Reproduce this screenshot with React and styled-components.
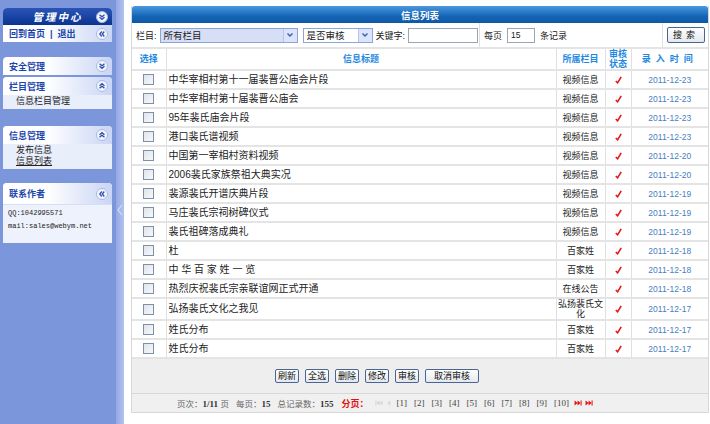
import React from "react";
import styled, { createGlobalStyle } from "styled-components";

const Global = createGlobalStyle`
  html, body { margin: 0; padding: 0; background: #fff; }
  body { font-family: "Liberation Sans", "Noto Sans CJK SC", sans-serif; font-size: 9.5px; color: #222; }
`;

const Page = styled.div`
  display: flex;
  width: 710px;
  height: 424px;
  overflow: hidden;
`;

const Sidebar = styled.div`
  width: 109px;
  flex: none;
  background: #7c96dc;
  padding: 8px 4px 0 3px;
  display: flex;
  flex-direction: column;
`;

const Divider = styled.div`
  width: 8px;
  flex: none;
  background: linear-gradient(to right, #93a9e4, #b3c2ee);
  display: flex;
  align-items: center;
  justify-content: center;
  padding-bottom: 4px;
`;

const Box = styled.div`
  margin-top: ${(p) => p.$gap || 0}px;
  background: #fff;
  border-radius: 4px 4px 0 0;
  overflow: hidden;
`;

const BoxHead = styled.div`
  height: ${(p) => p.$h || 18}px;
  display: flex;
  align-items: center;
  justify-content: space-between;
  padding: 0 4px 0 6px;
  white-space: nowrap;
  background: ${(p) =>
    p.$dark
      ? "linear-gradient(#2a55b8, #0b3490)"
      : "linear-gradient(to right, #ffffff 40%, #c9d5f5)"};
  color: ${(p) => (p.$dark ? "#fff" : "#1c45ad")};
  font-weight: bold;
  font-size: 9px;
  border-bottom: ${(p) => (p.$line ? "1px solid #d6def5" : "none")};
`;

const Logo = styled.span`
  flex: 1;
  text-align: center;
  font-style: italic;
  letter-spacing: 2px;
  font-size: 10.5px;
  padding-left: 10px;
`;

const Item = styled.div`
  background: #e9eefb;
  padding: ${(p) => p.$pad || "1px 0 1px 13px"};
  color: #222;
  line-height: 11px;
  height: 11px;
  font-size: 9px;
  text-decoration: ${(p) => (p.$u ? "underline" : "none")};
`;

const Contact = styled.div`
  background: #eef2fc;
  height: 36px;
  padding: 2px 0 0 5px;
  font-family: "Liberation Mono", "DejaVu Sans Mono", monospace;
  font-size: 7px;
  line-height: 13px;
  color: #222;
`;

const Main = styled.div`
  flex: 1;
  padding: 6px 4px 0 7px;
`;

const Panel = styled.div`
  border: 1px solid #d8d8d8;
  border-top: none;
`;

const TitleBar = styled.div`
  height: 17px;
  background: linear-gradient(#4a98e0, #1565b5 60%, #0d58a6);
  border-radius: 3px 3px 0 0;
  color: #fff;
  font-weight: bold;
  font-size: 9.5px;
  display: flex;
  align-items: center;
  justify-content: center;
`;

const SearchRow = styled.div`
  display: grid;
  grid-template-columns: 348px 183px 1fr;
  height: 24px;
  border-bottom: 2px solid #e4e4e4;
  white-space: nowrap;
`;

const SearchCell = styled.div`
  display: flex;
  align-items: center;
  gap: 3px;
  padding-left: 4px;
  justify-content: ${(p) => (p.$end ? "flex-end" : "flex-start")};
  padding-right: ${(p) => (p.$end ? 3 : 0)}px;
  font-size: 9px;
  border-right: ${(p) => (p.$last ? "none" : "1px solid #e0e0e0")};
`;

const Select = styled.div`
  width: ${(p) => p.$w}px;
  height: 15px;
  flex: none;
  border: 1px solid #8ca4d6;
  background: ${(p) => (p.$tint ? "#d7dff7" : "#fff")};
  display: flex;
  align-items: center;
  justify-content: space-between;
  padding-left: 3px;
  box-sizing: border-box;
  font-size: 9.5px;
  margin-right: ${(p) => p.$mr || 0}px;
`;

const SelArrow = styled.span`
  width: 13px;
  height: 13px;
  background: #dbe4fb;
  border-left: 1px solid #b5c5ec;
  display: flex;
  align-items: center;
  justify-content: center;
`;

const Input = styled.div`
  width: ${(p) => p.$w}px;
  height: 15px;
  flex: none;
  border: 1px solid #9aa5b5;
  box-sizing: border-box;
  background: #fff;
  padding-left: 3px;
  font-size: 8.5px;
  line-height: 13px;
  margin: 0 ${(p) => p.$mx || 0}px;
`;

const Button = styled.button`
  font-family: inherit;
  font-size: 9px;
  height: ${(p) => p.$h || 14}px;
  padding: 0 ${(p) => p.$px || 2}px;
  border: 1px solid #4a6590;
  border-radius: 2px;
  background: linear-gradient(#ffffff, #e4e8ee);
  color: #111;
  line-height: 1;
  white-space: nowrap;
  letter-spacing: ${(p) => p.$ls || 0}px;
  cursor: pointer;
`;

const Table = styled.table`
  width: 100%;
  border-collapse: collapse;
  table-layout: fixed;
`;

const Th = styled.th`
  color: #1e88e0;
  font-weight: bold;
  font-size: 9px;
  line-height: 10px;
  height: 18px;
  padding: 0;
  letter-spacing: ${(p) => p.$ls || 0}px;
  border-bottom: 2px solid #e4e4e4;
  border-right: 1px solid #e0e0e0;
  &:last-child { border-right: none; }
`;

const Td = styled.td`
  height: ${(p) => p.$h || 17}px;
  padding: 0 0 0 ${(p) => (p.$left ? 2 : 0)}px;
  text-align: ${(p) => (p.$left ? "left" : "center")};
  font-size: ${(p) => p.$fs || 9.5}px;
  line-height: 10px;
  color: ${(p) => p.$color || "#222"};
  white-space: nowrap;
  border-bottom: 2px solid #e4e4e4;
  border-right: 1px solid #e0e0e0;
  &:last-child { border-right: none; }
`;

const Check = styled.span`
  display: block;
  margin: 0 auto;
  width: 9px;
  height: 9px;
  border: 1px solid #7d90a8;
  background: linear-gradient(135deg, #dfe5ec, #f6f8fa);
`;

const Actions = styled.div`
  background: #eeeeee;
  height: 34px;
  display: flex;
  align-items: center;
  justify-content: center;
  gap: 6px;
  padding-right: 86px;
  border-bottom: 1px solid #d8d8d8;
`;

const Pager = styled.div`
  background: #f0f0f0;
  height: 18px;
  display: flex;
  align-items: center;
  justify-content: center;
  gap: 3px;
  padding-right: 70px;
  color: #666;
  font-size: 8.5px;
  white-space: nowrap;
`;

const B = styled.b`
  color: #333;
  font-family: "Liberation Serif", serif;
  font-size: 9px;
`;

const Red = styled.b`
  color: #e01010;
  font-size: 9px;
  margin: 0 4px 0 5px;
`;

const PageNum = styled.span`
  color: #444;
  font-family: "Liberation Serif", serif;
  font-size: 9px;
  margin: 0 2px;
`;

const Label = styled.span`
  margin-left: ${(p) => p.$ml || 0}px;
`;

const RoundIcon = ({ dir }) => {
  const paths = {
    down: ["M3.5 3.8 L6 5.8 L8.5 3.8", "M3.5 6.3 L6 8.3 L8.5 6.3"],
    up: ["M3.5 5.7 L6 3.7 L8.5 5.7", "M3.5 8.2 L6 6.2 L8.5 8.2"],
    left: ["M5.8 3.5 L3.8 6 L5.8 8.5", "M8.3 3.5 L6.3 6 L8.3 8.5"],
  };
  return (
    <svg width="12" height="12" viewBox="0 0 12 12">
      <circle cx="6" cy="6" r="5.5" fill="#f4f6fc" stroke="#a9b9e6" />
      {paths[dir].map((d) => (
        <path key={d} d={d} fill="none" stroke="#2a52b0" strokeWidth="1.3" />
      ))}
    </svg>
  );
};

const Tick = () => (
  <svg width="7" height="8" viewBox="0 0 7 8" style={{ display: "block", margin: "0 auto" }}>
    <path d="M0.8 5 L2.6 6.8 L6.2 0.8" fill="none" stroke="#e01818" strokeWidth="1.6" />
  </svg>
);

const Chevron = ({ color = "#3b5fb0" }) => (
  <svg width="8" height="6" viewBox="0 0 8 6">
    <path d="M1.5 1.5 L4 4 L6.5 1.5" fill="none" stroke={color} strokeWidth="1.4" />
  </svg>
);

const Skip = ({ color, rev }) => (
  <svg width="8" height="6" viewBox="0 0 9 7" style={{ transform: rev ? "scaleX(-1)" : "none" }}>
    <path d="M0.5 0.5 L4 3.5 L0.5 6.5 Z M4 0.5 L7.5 3.5 L4 6.5 Z" fill={color} />
    <rect x="7.5" y="0.5" width="1.2" height="6" fill={color} />
  </svg>
);

const Prev = ({ color }) => (
  <svg width="5" height="6" viewBox="0 0 5 7">
    <path d="M4.5 0.5 L1 3.5 L4.5 6.5 Z" fill={color} />
  </svg>
);

const rows = [
  ["中华宰相村第十一届裴晋公庙会片段", "视频信息", "2011-12-23"],
  ["中华宰相村第十届裴晋公庙会", "视频信息", "2011-12-23"],
  ["95年裴氏庙会片段", "视频信息", "2011-12-23"],
  ["港口裴氏谱视频", "视频信息", "2011-12-23"],
  ["中国第一宰相村资料视频", "视频信息", "2011-12-20"],
  ["2006裴氏家族祭祖大典实况", "视频信息", "2011-12-20"],
  ["裴源裴氏开谱庆典片段", "视频信息", "2011-12-19"],
  ["马庄裴氏宗祠树碑仪式", "视频信息", "2011-12-19"],
  ["裴氏祖碑落成典礼", "视频信息", "2011-12-19"],
  ["杜", "百家姓", "2011-12-18"],
  ["中 华 百 家 姓 一 览", "百家姓", "2011-12-18"],
  ["热烈庆祝裴氏宗亲联谊网正式开通", "在线公告", "2011-12-18"],
  ["弘扬裴氏文化之我见", "弘扬裴氏文化", "2011-12-17", true],
  ["姓氏分布", "百家姓", "2011-12-17"],
  ["姓氏分布", "百家姓", "2011-12-17"],
];

export default function App() {
  return (
    <>
      <Global />
      <Page>
        <Sidebar>
          <Box>
            <BoxHead $dark $h={17}>
              <Logo>管理中心</Logo>
              <RoundIcon dir="down" />
            </BoxHead>
            <BoxHead $h={17}>
              <span>回到首页 &nbsp;|&nbsp; 退出</span>
              <RoundIcon dir="left" />
            </BoxHead>
          </Box>

          <Box $gap={15}>
            <BoxHead>
              <span>安全管理</span>
              <RoundIcon dir="down" />
            </BoxHead>
          </Box>
          <Box $gap={2}>
            <BoxHead>
              <span>栏目管理</span>
              <RoundIcon dir="up" />
            </BoxHead>
            <Item $pad="1px 0 2px 13px">信息栏目管理</Item>
          </Box>

          <Box $gap={17}>
            <BoxHead>
              <span>信息管理</span>
              <RoundIcon dir="up" />
            </BoxHead>
            <Item $pad="1px 0 0 13px">发布信息</Item>
            <Item $pad="0 0 2px 13px" $u>信息列表</Item>
          </Box>

          <Box $gap={14}>
            <BoxHead $h={21} $line>
              <span>联系作者</span>
              <RoundIcon dir="left" />
            </BoxHead>
            <Contact>
              <div>QQ:1042995571</div>
              <div>mail:sales@webym.net</div>
            </Contact>
          </Box>
        </Sidebar>

        <Divider>
          <svg width="6" height="12" viewBox="0 0 6 12">
            <path d="M5 1 L1 6 L5 11" fill="none" stroke="#d6def7" strokeWidth="1.2" />
          </svg>
        </Divider>

        <Main>
          <Panel>
            <TitleBar>信息列表</TitleBar>
            <SearchRow>
              <SearchCell>
                <span>栏目:</span>
                <Select $w={138} $tint $mr={2}>
                  <span>所有栏目</span>
                  <SelArrow><Chevron /></SelArrow>
                </Select>
                <Select $w={70}>
                  <span>是否审核</span>
                  <SelArrow><Chevron /></SelArrow>
                </Select>
                <span>关键字:</span>
                <Input $w={70} />
              </SearchCell>
              <SearchCell>
                <span>每页</span>
                <Input $w={28} $mx={2}>15</Input>
                <span>条记录</span>
              </SearchCell>
              <SearchCell $last $end>
                <Button $h={16} $px={5} $ls={4}>搜索</Button>
              </SearchCell>
            </SearchRow>

            <Table>
              <colgroup>
                <col style={{ width: 34 }} />
                <col />
                <col style={{ width: 49 }} />
                <col style={{ width: 26 }} />
                <col style={{ width: 77 }} />
              </colgroup>
              <thead>
                <tr>
                  <Th>选择</Th>
                  <Th>信息标题</Th>
                  <Th>所属栏目</Th>
                  <Th>审核<br />状态</Th>
                  <Th $ls={5}>录入时间</Th>
                </tr>
              </thead>
              <tbody>
                {rows.map(([title, cat, date, tall], i) => (
                  <tr key={i}>
                    <Td $h={tall ? 20 : 17}><Check /></Td>
                    <Td $left $fs={10}>{title}</Td>
                    <Td $fs={9}>{tall ? <>弘扬裴氏文<br />化</> : cat}</Td>
                    <Td><Tick /></Td>
                    <Td $color="#4680c0" $fs={8.5}>{date}</Td>
                  </tr>
                ))}
              </tbody>
            </Table>

            <Actions>
              <Button>刷新</Button>
              <Button>全选</Button>
              <Button>删除</Button>
              <Button>修改</Button>
              <Button>审核</Button>
              <Button $px={8}>取消审核</Button>
            </Actions>

            <Pager>
              <Label>页次：<B>1/11</B> 页</Label>
              <Label $ml={4}>每页：<B>15</B></Label>
              <Label $ml={4}>总记录数：<B>155</B></Label>
              <Red>分页：</Red>
              <Skip color="#d6d6d6" rev />
              <Prev color="#d6d6d6" />
              {[1, 2, 3, 4, 5, 6, 7, 8, 9, 10].map((n) => (
                <PageNum key={n}>[{n}]</PageNum>
              ))}
              <Skip color="#e01010" />
              <Skip color="#e01010" />
            </Pager>
          </Panel>
        </Main>
      </Page>
    </>
  );
}
